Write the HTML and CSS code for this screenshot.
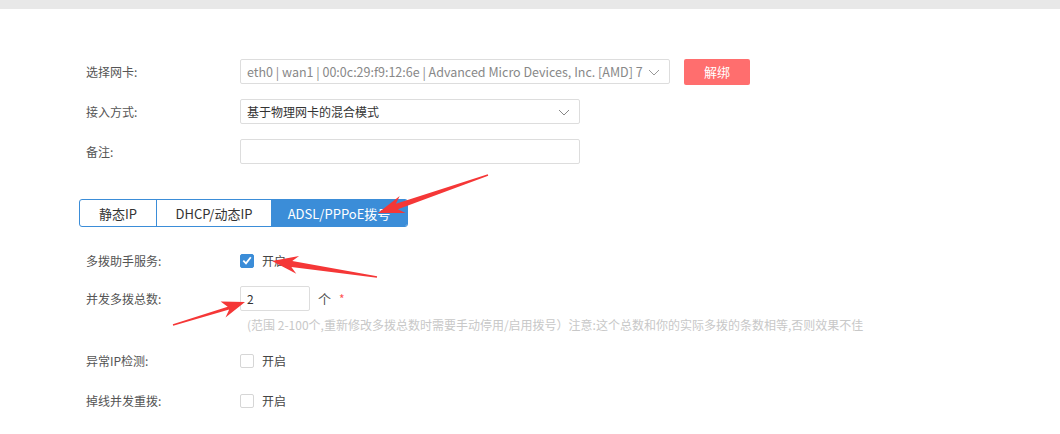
FILE: index.html
```html
<!DOCTYPE html>
<html lang="zh-CN">
<head>
<meta charset="utf-8">
<title>网卡设置</title>
<link rel="stylesheet" href="styles.css">
</head>
<body>
<div class="topbar"></div>
<div class="page">
  <div class="form">
    <div class="row">
      <label class="label">选择网卡:</label>
      <div class="select wide muted"><span class="val">eth0 | wan1 | 00:0c:29:f9:12:6e | Advanced Micro Devices, Inc. [AMD] 7</span>
        <svg class="chev" width="12" height="7" viewBox="0 0 12 7"><path d="M1 1 L6 6 L11 1" fill="none" stroke="#999" stroke-width="1"/></svg>
      </div>
      <button class="btn-danger">解绑</button>
    </div>
    <div class="row">
      <label class="label">接入方式:</label>
      <div class="select mid"><span class="val">基于物理网卡的混合模式</span>
        <svg class="chev" width="12" height="7" viewBox="0 0 12 7"><path d="M1 1 L6 6 L11 1" fill="none" stroke="#888" stroke-width="1"/></svg>
      </div>
    </div>
    <div class="row">
      <label class="label">备注:</label>
      <div class="input mid"></div>
    </div>

    <div class="tabs">
      <div class="tab t1">静态IP</div>
      <div class="tab t2">DHCP/动态IP</div>
      <div class="tab t3 active">ADSL/PPPoE拨号</div>
    </div>

    <div class="row r-a">
      <label class="label">多拨助手服务:</label>
      <span class="check on"><svg width="10" height="9" viewBox="0 0 10 9"><path d="M1.3 4.6 L4 7.3 L8.8 1.2" fill="none" stroke="#fff" stroke-width="1.8"/></svg></span>
      <span class="opt">开启</span>
    </div>
    <div class="row r-b">
      <label class="label">并发多拨总数:</label>
      <div class="input small">2</div>
      <span class="unit">个</span><span class="req">*</span>
    </div>
    <div class="hint">(范围 2-100个,重新修改多拨总数时需要手动停用/启用拨号）注意:这个总数和你的实际多拨的条数相等,否则效果不佳</div>
    <div class="row r-c">
      <label class="label">异常IP检测:</label>
      <span class="check"></span>
      <span class="opt">开启</span>
    </div>
    <div class="row r-d">
      <label class="label">掉线并发重拨:</label>
      <span class="check"></span>
      <span class="opt">开启</span>
    </div>
  </div>

  <svg class="arrows" width="1060" height="434" viewBox="0 0 1060 434">
    <polygon fill="#f53737" points="487.8,174.3 395.9,203.7 399.7,196.0 378,213 405.5,213.0 397.9,209.3 488.2,175.7"/>
    <polygon fill="#f53737" points="377.1,276.3 292.25,261.0 299.1,256.0 272,261 296.3,273.8 291.35,267.0 376.9,277.7"/>
    <polygon fill="#f53737" points="173.2,325.7 229.2,309.6 225.5,317.5 245,302 220.6,301.4 227.7,306.7 172.8,324.3"/>
  </svg>
</div>
</body>
</html>
```

FILE: styles.css
```css
* { box-sizing: border-box; }
html, body { margin: 0; padding: 0; background: #fff; }
body {
  font-family: "Noto Sans CJK SC", "Noto Sans", sans-serif;
  font-size: 12px;
  color: #555;
  width: 1060px;
  height: 434px;
  overflow: hidden;
}
.topbar { height: 9px; background: #e8e8e8; }
.page { position: relative; }
.arrows { position: absolute; left: 0; top: -9px; pointer-events: none; }
.form { padding: 50px 0 0 79px; }
.row { display: flex; align-items: center; height: 25px; margin-bottom: 15px; }
.label { width: 161px; padding-left: 7px; color: #555; line-height: 20px; }
.select, .input {
  position: relative;
  height: 25px;
  border: 1px solid #ddd;
  border-radius: 2px;
  background: #fff;
  display: flex;
  align-items: center;
  padding: 0 8px 0 6px;
  color: #333;
  overflow: hidden;
  white-space: nowrap;
}
.select .val { overflow: hidden; flex: 1; }
.select { padding-right: 26px; }
.select.muted { color: #888; }
.select.muted .val { font-size: 12.5px; }
.wide { width: 430px; }
.mid { width: 340px; }
.small { width: 70px; }
.chev { position: absolute; right: 9px; top: 9px; }
.btn-danger {
  margin-left: 14px;
  width: 66px;
  height: 26px;
  border: 0;
  border-radius: 2px;
  background: #ff6e6e;
  color: #fff;
  font-family: inherit;
  font-size: 13px;
  padding: 0;
}
.tabs {
  display: flex;
  width: 329px;
  height: 28px;
  margin-top: 35px;
  border: 1px solid #3b8dd8;
  border-radius: 3px;
  overflow: hidden;
}
.tab { display: flex; align-items: center; justify-content: center; color: #333; font-size: 13px; }
.t1 { width: 77px; border-right: 1px solid #3b8dd8; }
.t2 { width: 114px; }
.t3 { flex: 1; }
.tab.active { background: #3b8dd8; color: #fff; }
.r-a { margin-top: 21px; margin-bottom: 13px; }
.r-b { margin-bottom: 0; }
.check {
  width: 14px; height: 14px;
  border: 1px solid #d6d6d6;
  border-radius: 2px;
  background: #fff;
  display: flex; align-items: center; justify-content: center;
}
.check.on { background: #3b8dd8; border-color: #3b8dd8; }
.opt { margin-left: 8px; color: #444; }
.unit { margin-left: 8px; color: #555; font-size: 13px; }
.req { margin-left: 8px; color: #f55; font-size: 12px; }
.hint { margin: 4px 0 13px 168px; height: 20px; line-height: 20px; color: #c8c8c8; font-size: 12px; white-space: nowrap; }
.r-c { margin-bottom: 15px; }
```
